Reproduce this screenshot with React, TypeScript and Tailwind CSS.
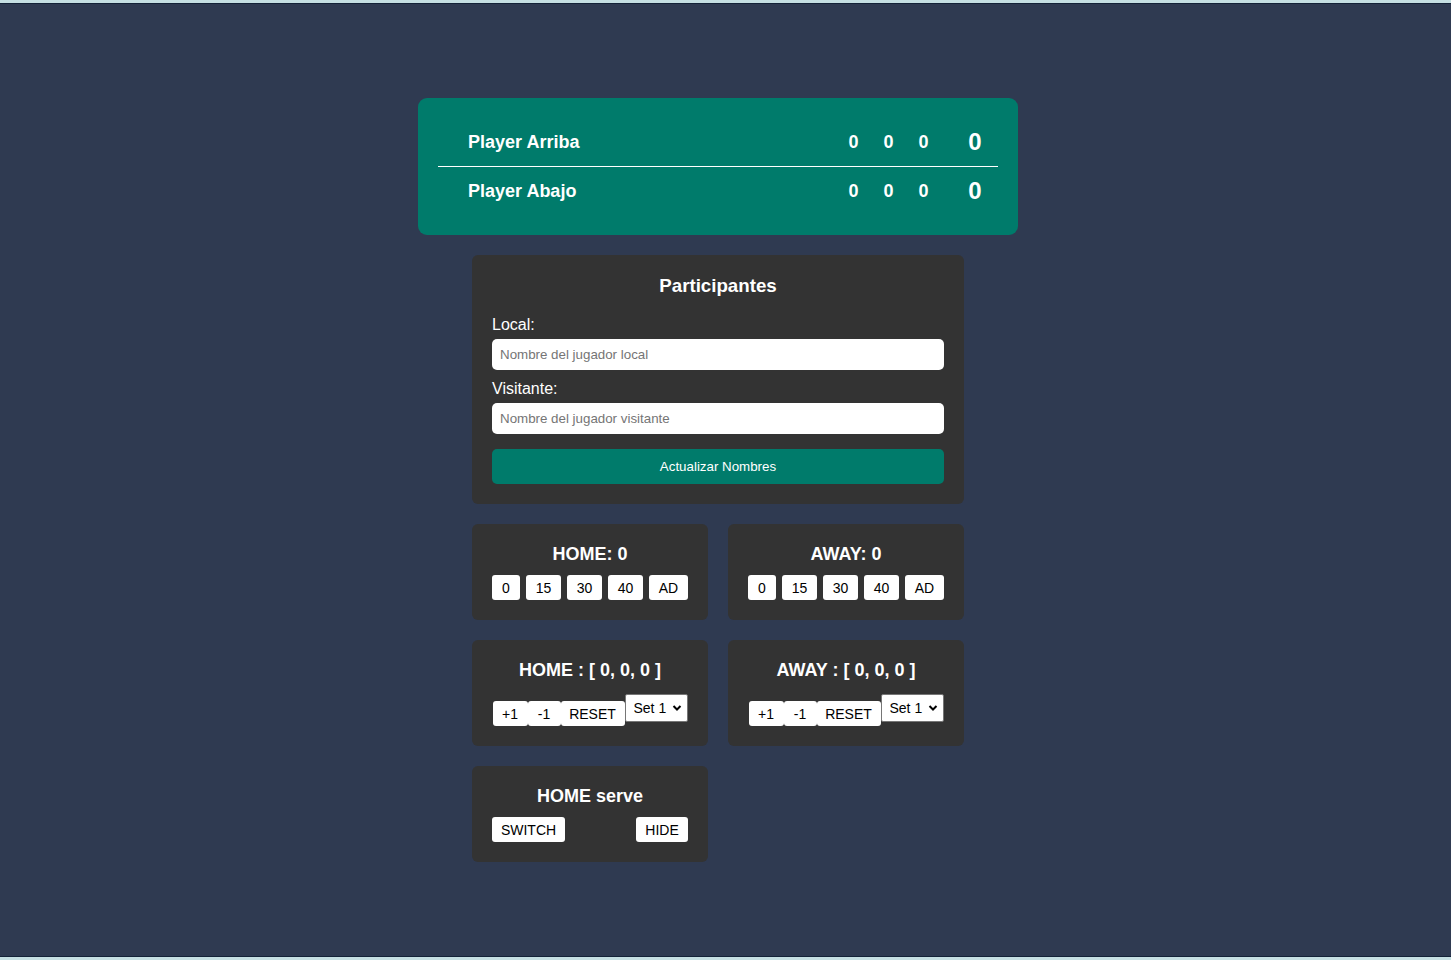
import { useState } from "react";

const font = { fontFamily: '"Liberation Sans", Arial, sans-serif' };

const ScoreRow = ({ name, sets, games }: { name: string; sets: number[]; games: number }) => (
  <div className="flex items-center h-[48px] pl-[30px] pr-[3px]">
    <span className="flex-1 text-[18px] font-bold text-white">{name}</span>
    {sets.map((s, i) => (
      <span key={i} className="w-[35px] text-center text-[18px] font-bold text-white">
        {s}
      </span>
    ))}
    <span className="w-[40px] ml-[14px] text-center text-[24px] font-bold text-white">{games}</span>
  </div>
);

const Panel = ({ children, className = "" }: { children: React.ReactNode; className?: string }) => (
  <div className={`bg-[#333333] rounded-[6px] ${className}`}>{children}</div>
);

const WhiteBtn = ({ label, className = "" }: { label: string; className?: string }) => (
  <button className={`h-[25px] bg-white text-black text-[14px] rounded-[3px] leading-none ${className}`}>
    {label}
  </button>
);

const pointWidths: Record<string, string> = {
  "0": "w-[28px]",
  "15": "w-[35px]",
  "30": "w-[35px]",
  "40": "w-[35px]",
  AD: "w-[39px]",
};

const PointsPanel = ({ team, points }: { team: string; points: string }) => (
  <Panel className="pt-[20px] pb-[20px] px-[20px] flex flex-col items-center">
    <h3 className="text-[18px] font-bold text-white leading-[21px]">
      {team}: {points}
    </h3>
    <div className="flex gap-[6px] mt-[10px]">
      {["0", "15", "30", "40", "AD"].map((p) => (
        <WhiteBtn key={p} label={p} className={pointWidths[p]} />
      ))}
    </div>
  </Panel>
);

const SetsPanel = ({ team }: { team: string }) => {
  const [set, setSet] = useState("1");
  return (
    <Panel className="pt-[20px] pb-[20px] px-[20px] flex flex-col items-center">
      <h3 className="text-[18px] font-bold text-white leading-[21px]">{team} : [ 0, 0, 0 ]</h3>
      <div className="flex items-end mt-[13px]">
        <WhiteBtn label="+1" className="w-[35px]" />
        <WhiteBtn label="-1" className="w-[33px]" />
        <WhiteBtn label="RESET" className="w-[64px]" />
        <div className="flex items-center h-[28px] w-[63px] mb-[4px] bg-white rounded-[2px] border border-[#767676] pl-[8px] pr-[5px]">
          <select
            value={set}
            onChange={(e) => setSet(e.target.value)}
            className="appearance-none bg-transparent text-[14px] text-black outline-none flex-1 w-0"
          >
            <option value="1">Set 1</option>
            <option value="2">Set 2</option>
            <option value="3">Set 3</option>
          </select>
          <svg width="10" height="8" viewBox="0 0 10 8" className="shrink-0">
            <path d="M1.5 2 L5 5.5 L8.5 2" stroke="#000" strokeWidth="2" fill="none" />
          </svg>
        </div>
      </div>
    </Panel>
  );
};

export default function App() {
  return (
    <div className="h-[960px] flex flex-col bg-[#2f3a51]" style={font}>
      <div className="h-[3px] bg-[#c6dfe3]" />
      <main className="flex-1 border-y border-[#142238] pr-[15px] flex flex-col items-center pt-[94px]">
        {/* marcador */}
        <div className="w-[600px] bg-[#007b6b] rounded-[9px] px-[20px] pt-[20px] pb-[20px]">
          <ScoreRow name="Player Arriba" sets={[0, 0, 0]} games={0} />
          <div className="h-px bg-white" />
          <ScoreRow name="Player Abajo" sets={[0, 0, 0]} games={0} />
        </div>

        <div className="w-[492px] mt-[20px] flex flex-col gap-[20px]">
          <Panel className="px-[20px] pt-[20px] pb-[20px]">
            <h3 className="text-[18.72px] font-bold text-white text-center leading-[22px]">Participantes</h3>
            <label className="block mt-[19px] text-[16px] text-white leading-[18px]">Local:</label>
            <input
              className="mt-[5px] w-full h-[31px] bg-white rounded-[5px] px-[8px] text-[13.33px] text-black placeholder:text-[#757575] outline-none"
              placeholder="Nombre del jugador local"
            />
            <label className="block mt-[10px] text-[16px] text-white leading-[18px]">Visitante:</label>
            <input
              className="mt-[5px] w-full h-[31px] bg-white rounded-[5px] px-[8px] text-[13.33px] text-black placeholder:text-[#757575] outline-none"
              placeholder="Nombre del jugador visitante"
            />
            <button className="mt-[15px] w-full h-[35px] bg-[#007b6b] rounded-[5px] text-[13.33px] text-white">
              Actualizar Nombres
            </button>
          </Panel>

          <div className="grid grid-cols-2 gap-[20px]">
            <PointsPanel team="HOME" points="0" />
            <PointsPanel team="AWAY" points="0" />
            <SetsPanel team="HOME" />
            <SetsPanel team="AWAY" />
            <Panel className="pt-[20px] pb-[20px] px-[20px] flex flex-col">
              <h3 className="text-[18px] font-bold text-white leading-[21px] text-center">HOME serve</h3>
              <div className="flex justify-between mt-[10px]">
                <WhiteBtn label="SWITCH" className="w-[73px]" />
                <WhiteBtn label="HIDE" className="w-[52px]" />
              </div>
            </Panel>
          </div>
        </div>
      </main>
      <div className="h-[3px] bg-[#c6dfe3]" />
    </div>
  );
}
